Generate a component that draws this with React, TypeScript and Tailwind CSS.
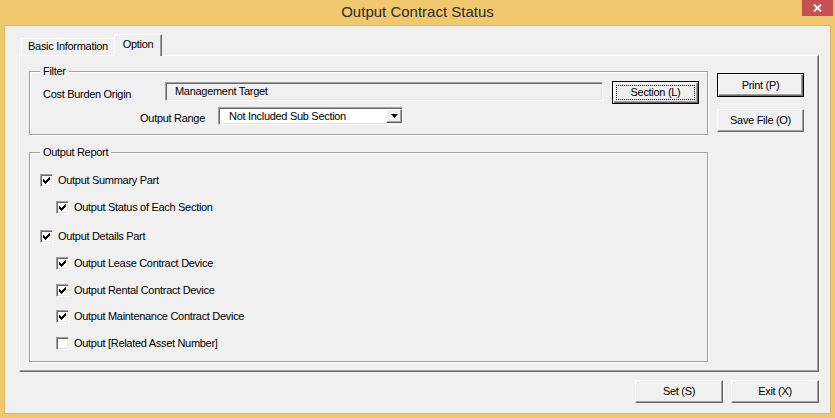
import React from 'react';

const raised =
  'border border-t-white border-l-white border-r-[#696969] border-b-[#696969] shadow-[inset_-1px_-1px_0_#a0a0a0]';
const sunken =
  'border border-t-[#a0a0a0] border-l-[#a0a0a0] border-r-white border-b-white shadow-[inset_1px_1px_0_#696969,inset_-1px_-1px_0_#e3e3e3]';

const Button: React.FC<{ label: string; w: string; def?: boolean; focus?: boolean; h?: string }> = ({
  label,
  w,
  def,
  focus,
  h = 'h-[23px]',
}) => (
  <button
    className={`${w} ${h} flex items-stretch bg-[#f0f0f0] text-black ${
      def
        ? 'border border-black shadow-[inset_1px_1px_0_#fff,inset_-1px_-1px_0_#696969,inset_-2px_-2px_0_#a0a0a0]'
        : raised
    }`}
  >
    <span
      className={`flex-1 flex items-center justify-center m-[3px] ${
        focus ? 'border border-dotted border-black' : 'border border-transparent'
      }`}
    >
      {label}
    </span>
  </button>
);

const CheckBox: React.FC<{ checked: boolean; label: string; sub?: boolean; className?: string }> = ({
  checked,
  label,
  sub,
  className = '',
}) => (
  <div className={`flex items-center h-[14px] ${sub ? 'ml-[16px]' : ''} ${className}`}>
    <span className={`w-[13px] h-[13px] bg-white flex items-center justify-center ${sunken}`}>
      {checked && (
        <svg width="9" height="9" viewBox="0 0 9 9" shapeRendering="crispEdges">
          <path d="M1 3 L3.2 5.2 L8 0.4 L8 3.4 L3.2 8.2 L1 6 Z" fill="#000" />
        </svg>
      )}
    </span>
    <span className="ml-[5px]">{label}</span>
  </div>
);

const Group: React.FC<{ title: string; className: string; children: React.ReactNode }> = ({
  title,
  className,
  children,
}) => (
  <div
    className={`relative border border-[#a0a0a0] shadow-[inset_1px_1px_0_#fff,1px_1px_0_#fff] ${className}`}
  >
    <span className="absolute -top-[8px] left-[10px] px-[3px] bg-[#f0f0f0] leading-[14px]">{title}</span>
    {children}
  </div>
);

export default function App() {
  return (
    <div className="w-[835px] h-[418px] bg-[#f0c86e] flex flex-col font-['Liberation_Sans',Arial,sans-serif] text-[11px] tracking-[-0.3px] text-black select-none">
      {/* title bar */}
      <div className="h-[25px] grid grid-cols-[1fr_auto_1fr] items-start shrink-0">
        <div />
        <div className="h-[25px] flex items-center text-[15px] tracking-normal text-[#2a2a2a]">Output Contract Status</div>
        <div className="flex justify-end pr-[2px]">
          <div className="w-[31px] h-[16px] bg-[#c75050] flex items-center justify-center">
            <svg width="9" height="8" viewBox="0 0 9 8">
              <path d="M1 0.5 L8 7.5 M8 0.5 L1 7.5" stroke="#fff" strokeWidth="1.8" />
            </svg>
          </div>
        </div>
      </div>

      {/* client area */}
      <div className="mx-[4px] mb-[4px] flex-1 bg-[#f0f0f0] border border-[#dcb866] pl-[14px] pt-[8px]">
        {/* tabs */}
        <div className="h-[21px] flex items-start pl-[2px]">
          <div className="mt-[4px] w-[93px] h-[17px] flex items-center justify-center pb-[1px] border-t border-l border-t-white border-l-white">
            Basic Information
          </div>
          <div className="relative z-10 w-[48px] h-[22px] bg-[#f0f0f0] flex items-center justify-center pb-[3px] border-t border-l border-r border-t-white border-l-white border-r-[#696969] shadow-[inset_-1px_0_0_#a0a0a0]">
            Option
          </div>
        </div>

        {/* tab panel */}
        <div className="w-[800px] h-[317px] border border-t-white border-l-white border-r-[#696969] border-b-[#696969] shadow-[inset_-1px_-1px_0_#a0a0a0] pl-[9px] pt-[15px] flex gap-[9px]">
          <div className="w-[679px] flex flex-col">
            <Group title="Filter" className="h-[64px] pl-[13px] pt-[9px]">
              <div className="flex items-center h-[23px]">
                <span className="w-[122px] pt-[3px]">Cost Burden Origin</span>
                <div className={`w-[438px] h-[19px] self-start mt-[1px] flex items-center pl-[9px] ${sunken}`}>
                  Management Target
                </div>
                <div className="ml-[9px]">
                  <Button label="Section (L)" w="w-[87px]" def focus />
                </div>
              </div>
              <div className="flex items-center mt-[3px] h-[18px]">
                <span className="w-[162px] text-right pt-[5px]">Output Range</span>
                <div className={`ml-[13px] w-[185px] h-[18px] bg-white flex items-center ${sunken}`}>
                  <span className="flex-1 pl-[10px]">Not Included Sub Section</span>
                  <span className={`w-[16px] h-[14px] bg-[#f0f0f0] flex items-center justify-center ${raised}`}>
                    <svg width="7" height="4" viewBox="0 0 7 4">
                      <path d="M0 0 H7 L3.5 4 Z" fill="#000" />
                    </svg>
                  </span>
                </div>
              </div>
            </Group>

            <Group title="Output Report" className="mt-[17px] h-[210px] pl-[10px] pt-[20px]">
              <CheckBox checked label="Output Summary Part" />
              <CheckBox checked sub label="Output Status of Each Section" className="mt-[13px]" />
              <CheckBox checked label="Output Details Part" className="mt-[15px]" />
              <CheckBox checked sub label="Output Lease Contract Device" className="mt-[13px]" />
              <CheckBox checked sub label="Output Rental Contract Device" className="mt-[13px]" />
              <CheckBox checked sub label="Output Maintenance Contract Device" className="mt-[12px]" />
              <CheckBox checked={false} sub label="Output [Related Asset Number]" className="mt-[13px]" />
            </Group>
          </div>

          <div className="flex flex-col pt-[2px]">
            <Button label="Print (P)" w="w-[87px]" h="h-[24px]" def />
            <div className="mt-[12px]">
              <Button label="Save File (O)" w="w-[87px]" />
            </div>
          </div>
        </div>

        {/* bottom buttons */}
        <div className="w-[800px] flex justify-end gap-[8px] mt-[8px]">
          <Button label="Set (S)" w="w-[88px]" />
          <Button label="Exit (X)" w="w-[88px]" />
        </div>
      </div>
    </div>
  );
}
